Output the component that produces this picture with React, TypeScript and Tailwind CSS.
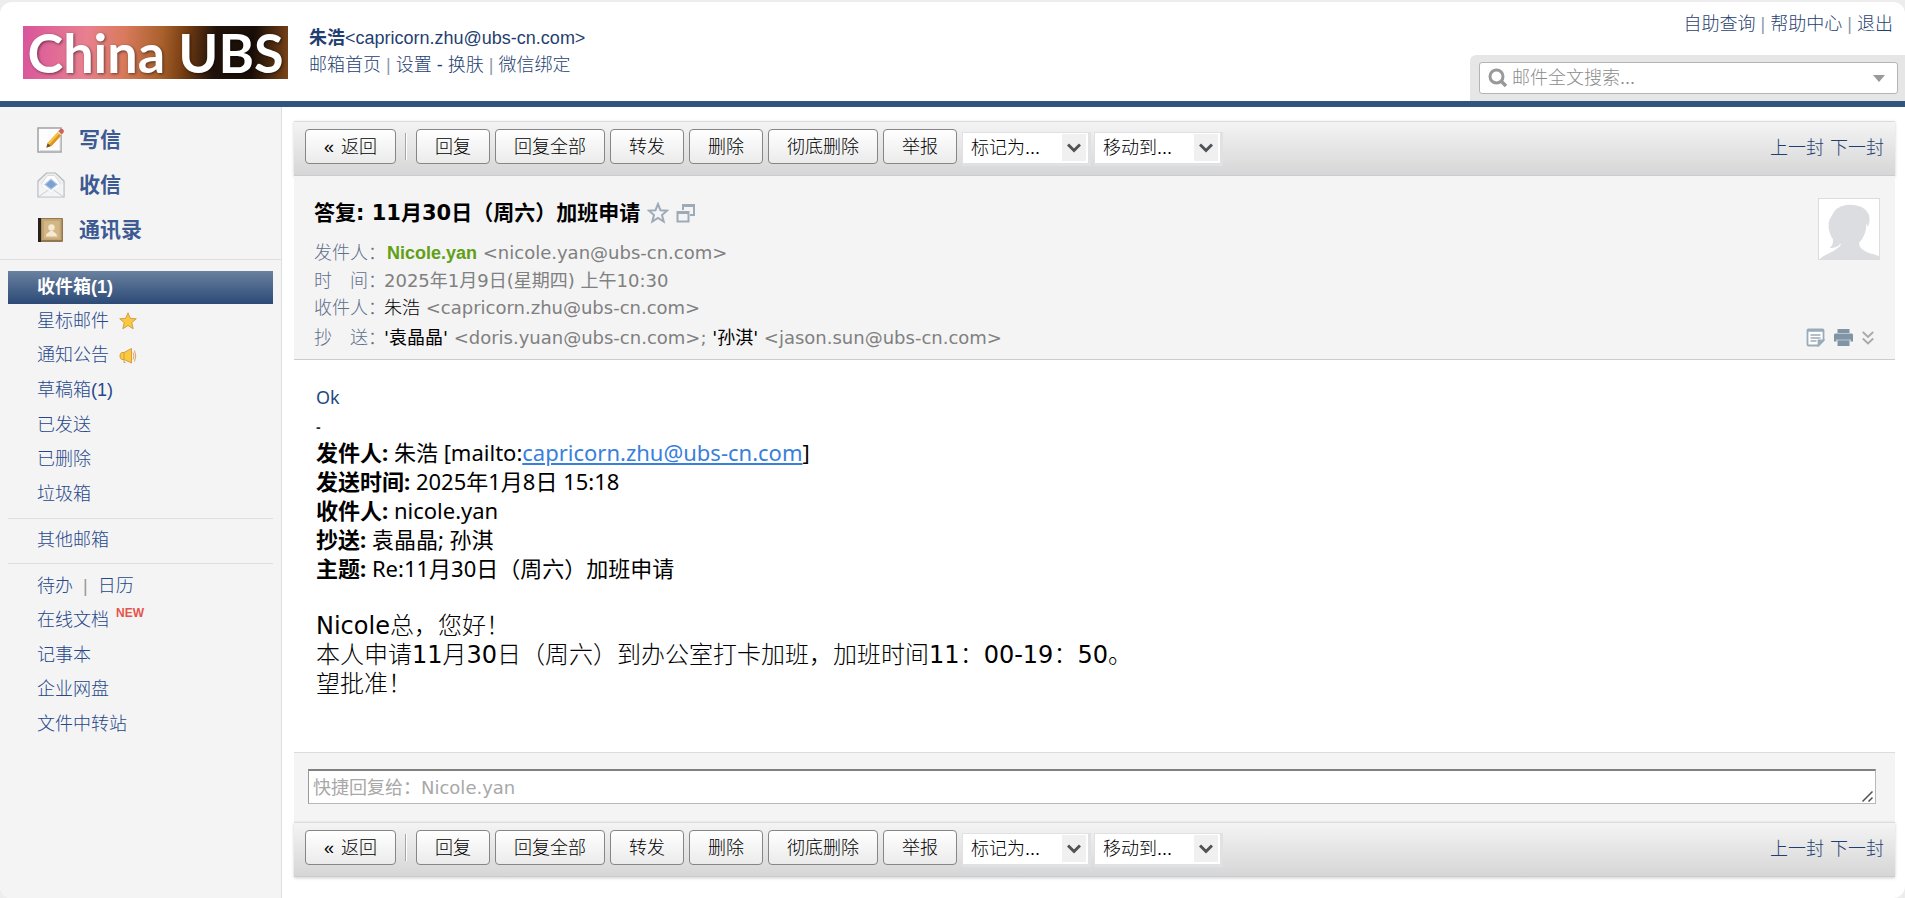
import type { ReactNode } from "react";

const composeLinks = [
  { label: "写信", icon: <WriteIcon /> },
  { label: "收信", icon: <InboxIcon /> },
  { label: "通讯录", icon: <ContactsIcon /> },
];

const folders = [
  { label: "星标邮件", icon: <StarFilledIcon /> },
  { label: "通知公告", icon: <HornIcon /> },
  { label: "草稿箱(1)" },
  { label: "已发送" },
  { label: "已删除" },
  { label: "垃圾箱" },
];

const mailActions = ["回复", "回复全部", "转发", "删除", "彻底删除", "举报"];

const quotedHeaders = [
  { label: "发送时间:", value: "2025年1月8日 15:18" },
  { label: "收件人:", value: "nicole.yan" },
  { label: "抄送:", value: "袁晶晶; 孙淇" },
  { label: "主题:", value: "Re:11月30日（周六）加班申请" },
];

function WriteIcon() {
  return (
    <svg width="28" height="26" viewBox="0 0 28 26" aria-hidden="true">
      <rect x="1" y="1" width="23" height="24" fill="#fdfdfd" stroke="#9fa1a3" strokeWidth="1.5" />
      <path d="M3 23.500h20V4" fill="none" stroke="#dcdddd" />
      <path d="M9.500 20.500l1.300-5L21 4.500l4 3L14.500 19z" fill="#f7c143" />
      <path d="M12.500 17.500L23 6l2 1.500L14.500 19z" fill="#dc9420" />
      <path d="M9.300 20.800l1.300-4.600 3.400 2.800z" fill="#6b5132" />
      <path d="M21.200 4.300L23 2.400c1.500-1.600 4.700.6 3.700 2.800L25 7.200z" fill="#d4605a" />
      <path d="M20.500 5l4 3" stroke="#e3dccb" strokeWidth="1.200" />
    </svg>
  );
}

function InboxIcon() {
  return (
    <svg width="28" height="26" viewBox="0 0 28 26" aria-hidden="true">
      <path d="M1 9L9.500 1h9L27 9v16H1z" fill="#eceeef" stroke="#b3b8bc" strokeWidth="1.200" />
      <path d="M5 11L10.500 3.500h7L23 11v4l-9 6-9-6z" fill="#fdfdfd" stroke="#d9dcdf" />
      <path d="M14 6.500l7 6-7 5.500-7-5.500z" fill="#a9c3e4" />
      <path d="M14 8l5 4.500-5 4-5-4z" fill="#7c9fcf" />
      <path d="M1.600 10.500L14 18.500l12.400-8V24.400H1.600z" fill="#f7f8f8" fillOpacity=".65" />
      <path d="M2 24.400l9.500-6.500M26 24.400l-9.500-6.500" stroke="#c9cdd1" />
    </svg>
  );
}

function ContactsIcon() {
  return (
    <svg width="28" height="26" viewBox="0 0 28 26" aria-hidden="true">
      <rect x="1" y="1" width="25" height="24" rx="1" fill="#927850" />
      <rect x="1" y="1" width="3" height="24" fill="#26211d" />
      <rect x="4.500" y="2" width="20" height="21" fill="#c4a573" />
      <rect x="7" y="4" width="15.500" height="17.500" fill="#d3b685" />
      <circle cx="14.500" cy="10.500" r="3.200" fill="#f5e9d2" />
      <path d="M9 19.500c0-4 3-3.500 4-5.500h3c1 2 4 1.500 4 5.500z" fill="#f5e9d2" />
    </svg>
  );
}

function StarFilledIcon() {
  return (
    <svg width="18" height="18" viewBox="0 0 18 18" aria-hidden="true">
      <path d="M9 .8l2.300 5.600 6 .4-4.600 3.900 1.500 6L9 13.500l-5.200 3.200 1.500-6L.7 6.800l6-.4z" fill="#f8cb3d" stroke="#d99a4e" />
    </svg>
  );
}

function HornIcon() {
  return (
    <svg width="18" height="18" viewBox="0 0 18 18" fill="#f8cb3d" stroke="#d99a4e" aria-hidden="true">
      <path d="M5 5.500h-2.500Q1 6 1 9t1.500 3.500H5L12.500 16V1.500z" />
      <path d="M5 5.500v7v3h1.500" fill="none" />
      <path d="M14 5.500q2 3.500 0 7M15.500 3.500q2.500 5.500 0 11" fill="none" strokeWidth=".9" />
    </svg>
  );
}

function Avatar() {
  return (
    <svg className="border border-[#dcdcdc] bg-white" width="62" height="62" viewBox="0 0 60 60" role="img" aria-label="Nicole.yan">
      <path
        d="M1 60C5 55.500 13 54 18 49.500Q22 47 22 44.500Q17 49.500 10.500 49Q14.500 46 14 40.500C9 33 8 24 12 18Q17 7 27 6C37 4.500 47 8 50 16Q51.500 22 49 28L47.500 24Q47.500 36 40 44Q40 49 45 51.500C50 55 57 55 60 57.500V60z"
        fill="#dcdde1"
      />
    </svg>
  );
}

function TopLink({ children }: { children: ReactNode }) {
  return (
    <a href="#" className="hover:underline">
      {children}
    </a>
  );
}

function Divider() {
  return <span className="text-[#8c9bb0]">|</span>;
}

function Header() {
  return (
    <header className="flex h-[105px] shrink-0 items-stretch border-b-[6px] border-[#31557f] text-[18px] leading-[27px] text-[#1f3f70]">
      <a
        href="#"
        className="mt-6 ml-[23px] flex h-[53px] w-[265px] items-center justify-center bg-[linear-gradient(95deg,#d9559c_0%,#e8808f_24%,#d97a5c_38%,#a9602c_52%,#7a4013_60%,#20120a_72%,#180d07_86%,#7d4518_100%)] font-[Lato,'Noto_Sans_CJK_SC',sans-serif] text-[54px] leading-[53px] font-bold whitespace-nowrap text-white [text-shadow:1px_1px_3px_#0008]"
      >
        China UBS
      </a>
      <div className="mt-[23px] ml-[21px]">
        <p>
          <b className="font-bold">朱浩</b>&lt;capricorn.zhu@ubs-cn.com&gt;
        </p>
        <p>
          <TopLink>邮箱首页</TopLink> <Divider /> <TopLink>设置</TopLink> - <TopLink>换肤</TopLink> <Divider />{" "}
          <TopLink>微信绑定</TopLink>
        </p>
      </div>
      <div className="ml-auto flex w-[435px] flex-col justify-between">
        <nav className="mt-[9px] mr-3 text-right">
          <TopLink>自助查询</TopLink> <Divider /> <TopLink>帮助中心</TopLink> <Divider /> <TopLink>退出</TopLink>
        </nav>
        <div className="rounded-tl-md bg-[#e6e6e6] py-[7px] pr-[7px] pl-[9px]">
          <label className="flex h-8 items-center gap-1 rounded-[3px] border border-[#b4b4b4] bg-white px-2">
            <svg width="20" height="20" viewBox="0 0 20 20" fill="none" stroke="#999" aria-hidden="true">
              <circle cx="8.500" cy="8.500" r="6.500" strokeWidth="3" />
              <path d="M13 13l5 5" strokeWidth="3.600" />
            </svg>
            <input
              type="text"
              aria-label="邮件全文搜索"
              placeholder="邮件全文搜索..."
              className="min-w-0 flex-1 outline-none placeholder:text-[#8c8c8c]"
            />
            <svg className="mr-1" width="12" height="7" viewBox="0 0 12 7" aria-hidden="true">
              <path d="M0 0h12L6 7z" fill="#999" />
            </svg>
          </label>
        </div>
      </div>
    </header>
  );
}

function Sidebar() {
  return (
    <aside className="w-[282px] shrink-0 border-r border-[#dfdfdf] bg-[#f4f4f4] text-[18px] text-[#26478a]">
      <nav className="border-b border-[#dfdfdf] pt-[10px] pb-[7px] text-[#3d5a92]">
        {composeLinks.map((link) => (
          <a key={link.label} href="#" className="flex h-[45px] items-center gap-[14px] pl-[37px] text-[21px] leading-[30px] font-bold">
            {link.icon}
            {link.label}
          </a>
        ))}
      </nav>
      <div className="mx-2 pt-[11px]">
        <a href="#" className="block h-[33px] bg-gradient-to-b from-[#6a819f] to-[#2d4a77] pl-[29px] leading-[33px] font-bold text-white">
          收件箱(1)
        </a>
        <ul className="grid h-[215px] auto-rows-fr border-b border-[#dfdfdf] pb-[6px]">
          {folders.map((folder) => (
            <li key={folder.label} className="flex items-center pl-[29px]">
              <a href="#" className="flex items-center gap-[10px]">
                {folder.label}
                {folder.icon}
              </a>
            </li>
          ))}
        </ul>
        <a href="#" className="block h-[45px] border-b border-[#dfdfdf] pl-[29px] leading-[43px]">
          其他邮箱
        </a>
        <ul className="grid h-[177px] auto-rows-fr pt-[5px] pl-[29px] leading-[34px]">
          <li>
            <a href="#">待办</a>
            <span className="mx-[10px] text-[#999]">|</span>
            <a href="#">日历</a>
          </li>
          <li>
            <a href="#" className="flex items-start gap-[7px]">
              在线文档
              <span className="text-[12px] leading-[20px] font-bold text-[#e4554b]">NEW</span>
            </a>
          </li>
          <li>
            <a href="#">记事本</a>
          </li>
          <li>
            <a href="#">企业网盘</a>
          </li>
          <li>
            <a href="#">文件中转站</a>
          </li>
        </ul>
      </div>
    </aside>
  );
}

function ToolButton({ children }: { children: ReactNode }) {
  return (
    <button className="h-[35px] rounded-[4px] border border-[#868686] bg-gradient-to-b from-white to-[#ebebeb] px-[18px] pt-[2px] whitespace-nowrap text-black">
      {children}
    </button>
  );
}

function ToolSelect({ label }: { label: string }) {
  return (
    <span className="relative inline-flex">
      <select
        aria-label={label}
        className="h-[34px] w-[129px] appearance-none border-t border-r-[3px] border-b-[3px] border-l border-[#dfe1e3] bg-white pl-2 font-light text-black"
      >
        <option>{label}...</option>
      </select>
      <span className="pointer-events-none absolute top-[2px] right-[5px] flex h-[27px] w-6 items-center justify-center bg-[#f0f0f0]">
        <svg width="14" height="10" viewBox="0 0 14 10" fill="none" stroke="#505356" strokeWidth="3" aria-hidden="true">
          <path d="M1 1.500l6 6 6-6" />
        </svg>
      </span>
    </span>
  );
}

function Toolbar() {
  return (
    <div className="flex h-[55px] items-start gap-[5px] border-t border-b border-t-[#dcdcdc] border-b-[#c8ccd3] bg-gradient-to-b from-[#f4f4f4] to-[#d6d6d6] pt-[7px] pr-[11px] pl-[11px] text-[18px] leading-[27px] shadow-[0_1px_3px_#0003]">
      <ToolButton>
        <span className="mr-[7px]">«</span>返回
      </ToolButton>
      <span className="mx-1 mt-1 h-[27px] w-[2px] border-r border-l border-r-white border-l-[#a5a5a5]" />
      {mailActions.map((action) => (
        <ToolButton key={action}>{action}</ToolButton>
      ))}
      <div className="flex gap-[3px] pt-[3px]">
        <ToolSelect label="标记为" />
        <ToolSelect label="移动到" />
      </div>
      <nav className="ml-auto flex gap-[6px] pt-[6px] whitespace-nowrap text-[#1f3f70]">
        <a href="#">上一封</a>
        <a href="#">下一封</a>
      </nav>
    </div>
  );
}

function InfoRow({ label, children }: { label: string; children: ReactNode }) {
  return (
    <div className="flex">
      <dt className="w-[70px] shrink-0 font-light whitespace-nowrap text-[#5f6f8b]">{label}</dt>
      <dd className="text-[#808080]">{children}</dd>
    </div>
  );
}

function MailInfo() {
  return (
    <section className="border-b border-[#c8ccd3] bg-[#f4f4f4] pt-[22px] pr-[15px] pb-2 pl-5 font-['DejaVu_Sans','Noto_Sans_CJK_SC',sans-serif] text-[18px] leading-[27px]">
      <div className="flex items-start justify-between">
        <div>
          <h1 className="flex h-[30px] items-center text-[21px] font-bold text-black">
            答复: 11月30日（周六）加班申请
            <svg className="ml-[7px]" width="22" height="22" viewBox="0 0 22 22" fill="none" stroke="#9dabb8" strokeWidth="2" aria-label="星标">
              <path d="M11 2l2.500 6.200 6.500.5-5 4.300 1.700 6.500L11 16l-5.700 3.500L7 13 2 8.700l6.500-.5z" />
            </svg>
            <svg className="ml-[7px]" width="19" height="20" viewBox="0 0 19 20" fill="none" stroke="#9dabb8" aria-label="新窗口">
              <path d="M7 7V2h11v10h-4M7 3h11" strokeWidth="2" />
              <path d="M1.500 9h11v9.500h-11zM1.500 10h11" strokeWidth="2" />
            </svg>
          </h1>
          <dl className="mt-[11px]">
            <InfoRow label="发件人：">
              <b className="ml-[3px] font-['Liberation_Sans',sans-serif] text-[#61a014]">Nicole.yan</b> &lt;nicole.yan@ubs-cn.com&gt;
            </InfoRow>
            <InfoRow label="时　间：">2025年1月9日(星期四) 上午10:30</InfoRow>
            <InfoRow label="收件人：">
              <span className="font-light text-black">朱浩</span> &lt;capricorn.zhu@ubs-cn.com&gt;
            </InfoRow>
          </dl>
        </div>
        <Avatar />
      </div>
      <div className="mt-[3px] flex items-center justify-between">
        <dl>
          <InfoRow label="抄　送：">
            <span className="text-black">'袁晶晶'</span> &lt;doris.yuan@ubs-cn.com&gt;; <span className="text-black">'孙淇'</span>{" "}
            &lt;jason.sun@ubs-cn.com&gt;
          </InfoRow>
        </dl>
        <div className="mr-[6px] flex items-center gap-[9px]">
          <button aria-label="备注">
            <svg width="19" height="19" viewBox="0 0 19 19" fill="none" stroke="#9aabb9" strokeWidth="1.800" aria-hidden="true">
              <path d="M2.500 1.500h14q1 0 1 1v10l-5 5h-10q-1 0-1-1v-14q0-1 1-1z" fill="#fff" />
              <path d="M1.500 2.500h16" strokeWidth="2.500" />
              <path d="M4.500 7h10M4.500 10h10M4.500 13h6" strokeWidth="1.400" />
              <path d="M17 12.500h-4.500V17z" fill="#9aabb9" />
            </svg>
          </button>
          <button aria-label="打印">
            <svg width="19" height="19" viewBox="0 0 19 19" fill="#8194a5" aria-hidden="true">
              <path d="M3.500 1h12v4h-12zM1 5.500h17l1 1v7h-2.500v-2h-14v2H0v-7zM3.500 11.500h12v6.500h-12z" />
              <path d="M3 5h13v1H3zM3.500 11.500h12v1h-12z" fill="#b9c5cf" />
            </svg>
          </button>
          <button aria-label="展开">
            <svg width="12" height="14" viewBox="0 0 12 14" fill="none" stroke="#a9a9a9" strokeWidth="1.800" aria-hidden="true">
              <path d="M.8 1L6 6l5.200-5M.8 7.500l5.200 5 5.200-5" />
            </svg>
          </button>
        </div>
      </div>
    </section>
  );
}

function MailBody() {
  return (
    <article className="pt-[23px] pb-[53px] pl-[22px] font-['Noto_Sans','Noto_Sans_CJK_SC',sans-serif] text-[22px] leading-[29px] text-black">
      <p className="text-[18px] text-[#1f497d]">Ok</p>
      <p className="mt-2 pb-[3px] font-['Liberation_Sans',sans-serif] text-[14px] leading-[15px] font-bold text-[#1f2f4d]">-</p>
      <p>
        <b>发件人:</b> 朱浩 [mailto:
        <a href="#" className="text-[#3a7fdc] underline">
          capricorn.zhu@ubs-cn.com
        </a>
        ]
      </p>
      {quotedHeaders.map((row) => (
        <p key={row.label}>
          <b>{row.label}</b> {row.value}
        </p>
      ))}
      <div className="mt-[29px] font-['DejaVu_Sans','Noto_Sans_CJK_SC',sans-serif] text-[24px] font-light">
        <p>
          <span className="font-normal">Nicole</span>总，您好！
        </p>
        <p>
          本人申请<span className="font-normal">11</span>月<span className="font-normal">30</span>
          日（周六）到办公室打卡加班，加班时间<span className="font-normal">11</span>：<span className="font-normal">00-19</span>：
          <span className="font-normal">50</span>。
        </p>
        <p>望批准！</p>
      </div>
    </article>
  );
}

export default function App() {
  return (
    <div className="flex min-h-screen flex-col bg-[#ededed] pt-[2px] font-['Liberation_Sans','Noto_Sans_CJK_SC',sans-serif] font-light">
      <div className="flex flex-1 flex-col overflow-hidden rounded-[12px] bg-white">
        <Header />
        <div className="flex flex-1">
          <Sidebar />
          <main className="min-w-0 flex-1 pt-[14px] pr-[10px] pl-3">
            <Toolbar />
            <div className="font-normal">
              <MailInfo />
              <MailBody />
            </div>
            <section className="border-t border-[#dcdcdc] bg-[#f4f4f4] pt-[16px] pr-[19px] pb-[18px] pl-[14px]">
              <div className="relative">
                <textarea
                  aria-label="快捷回复"
                  placeholder="快捷回复给：Nicole.yan"
                  rows={1}
                  className="block h-[35px] w-full resize-none border border-t-2 border-[#b8b8b8] border-t-[#808080] border-l-[#999] bg-white px-1 py-[3px] font-['DejaVu_Sans','Noto_Sans_CJK_SC',sans-serif] text-[18px] leading-[27px] font-normal outline-none placeholder:text-[#a8a8a8]"
                />
                <svg className="absolute right-[3px] bottom-[2px]" width="11" height="11" viewBox="0 0 11 11" stroke="#505050" strokeWidth="1.500" aria-hidden="true">
                  <path d="M.5 10.500l10-10M6.500 10.500l4-4" />
                </svg>
              </div>
            </section>
            <Toolbar />
          </main>
        </div>
      </div>
    </div>
  );
}
